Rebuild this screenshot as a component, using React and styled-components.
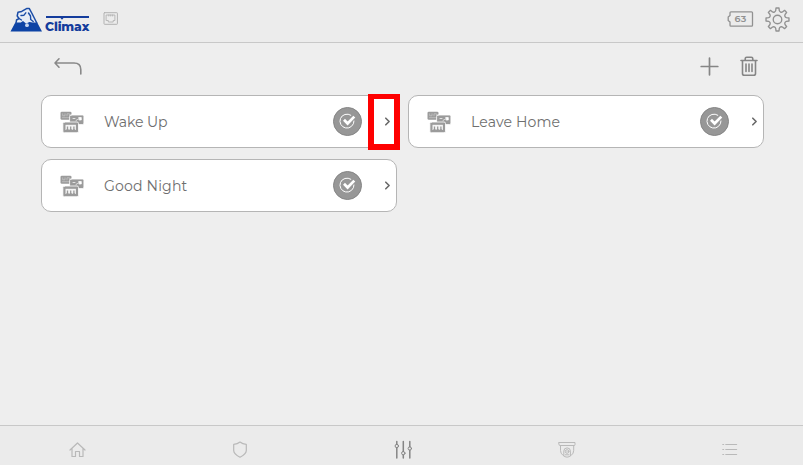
import React from "react";
import styled, { createGlobalStyle } from "styled-components";

const GlobalStyle = createGlobalStyle`
  * { box-sizing: border-box; }
  body { margin: 0; background: #eeeeee; font-family: Montserrat, Lato, "Open Sans", sans-serif; }
`;

const Screen = styled.div`
  display: flex;
  flex-direction: column;
  width: 803px;
  height: 465px;
  overflow: hidden;
  background: #eeeeee;
`;

const Header = styled.header`
  display: flex;
  align-items: flex-start;
  height: 43px;
  padding: 7px 13px 0 10px;
  background: #ececec;
  border-bottom: 1px solid #c8c8c8;
`;

const Brand = styled.div`
  display: flex;
  width: 92.5px;
  height: 27px;
`;

const BrandName = styled.div`
  display: flex;
  flex-direction: column;
  padding: 8px 0 0 2px;
  color: #143c9c;
  font: 800 12.3px/15px Montserrat, Inter, sans-serif;
  letter-spacing: -0.1px;
`;

const NetworkStatus = styled.div`
  padding-top: 5px;
`;

const HeaderTools = styled.div`
  display: flex;
  align-items: center;
  gap: 12px;
  margin: -0.5px 0.5px 0 auto;
`;

const Battery = styled.div`
  display: grid;
  width: 26px;
  height: 16px;
  color: #919191;
  > * { grid-area: 1 / 1; }
`;

const BatteryLevel = styled.span`
  place-self: center;
  padding-left: 2px;
  font: 600 9.5px/16px Montserrat, Inter, sans-serif;
  letter-spacing: 0.2px;
`;

const Main = styled.main`
  flex: 1;
  padding: 0 39px 0 41px;
`;

const Toolbar = styled.div`
  display: flex;
  align-items: center;
  height: 52px;
  padding: 0 5px 6px 12px;
`;

const ToolbarActions = styled.div`
  display: flex;
  align-items: center;
  gap: 21px;
  margin-left: auto;
`;

const IconButton = styled.button`
  display: flex;
  padding: 0;
  border: 0;
  background: none;
`;

const CardGrid = styled.div`
  display: grid;
  grid-template-columns: 356px 356px;
  gap: 11px;
`;

const Card = styled.article`
  position: relative;
  display: flex;
  align-items: center;
  height: 53px;
  padding: 0 5px 0 18px;
  border: 1px solid #b5b5b5;
  border-radius: 10px;
  background: #ffffff;
`;

const CardTitle = styled.span`
  flex: 1;
  padding-left: 20px;
  color: #6e6e6e;
  font-size: 14.1px;
  line-height: 20px;
  letter-spacing: ${(p) => p.$tracking}px;
  white-space: nowrap;
`;

const RunBadge = styled.span`
  display: flex;
  align-items: center;
  justify-content: center;
  width: 29px;
  height: 29px;
  margin-right: 22.5px;
  border: 1px solid #858585;
  border-radius: 50%;
  background: #979797;
`;

const Highlight = styled.span`
  position: absolute;
  top: -2px;
  right: -4px;
  width: 32px;
  height: 56px;
  border: solid #fe0000;
  border-width: 5px 6px 6px;
`;

const TabBar = styled.nav`
  display: flex;
  justify-content: space-between;
  height: 40px;
  padding: 12px 61px 0 65px;
  background: #ebebeb;
  border-top: 1px solid #c8c8c8;
`;

const Tab = styled.a`
  display: flex;
  width: 24px;
  height: 24px;
  color: ${(p) => (p.$active ? "#858585" : "#b9b9b9")};
`;

const Icon = styled.svg`
  display: block;
  flex: none;
  overflow: visible;
  color: ${(p) => p.$color || "inherit"};
  fill: none;
  stroke: currentColor;
  stroke-width: ${(p) => p.$weight || 1};
  stroke-linecap: round;
  stroke-linejoin: round;
`;

function Logo() {
  return (
    <Brand>
      <Icon width="33" height="26" viewBox="0 0 33 26" $color="#1a4ca6">
        <path d="M6 16V13l2.500-1.500L7 8l1.200-3.200L12 4l5-2.500 2.500.3L22 6.500l4.500 9.500z" fill="#e6ecf5" stroke="none" />
        <path d="M.5 24.500 5.300 15.500h5.500l2.200-1.500 3 2.500 3.500-1.500 3 .5h4.700L32 24.500z" fill="#0d43a5" stroke="none" />
        <path d="M6 16.500 6.500 13 9 11.500 7.200 9 8 5.200l3.700-.8 5.300-3h2.200L22 6.500l4.800 9.500" strokeWidth="1.500" />
        <path d="m11 8.500 3-.3 1.800-2.400M18.500 6l2 3 .2 3.500 2.500 2M9 11.500l2.500 1.500" strokeWidth="1.400" />
        <circle cx="17" cy="18.200" r="1.900" fill="#c8d7f0" stroke="none" />
      </Icon>
      <BrandName>
        <Icon width="44" height="4" viewBox="0 0 44 4" $color="#143c9c">
          <path d="M1 1h43v2H18.500L17 4.800 15.500 3H1z" fill="currentColor" stroke="none" />
        </Icon>
        Climax
      </BrandName>
    </Brand>
  );
}

function NetworkIcon() {
  return (
    <Icon width="15" height="13" viewBox="0 0 15 13" $color="#b2b2b2">
      <rect x="1" y=".7" width="13.400" height="11.600" rx=".6" />
      <path d="M3.500 3h8.400v5.500h-1.700V10H5.300V8.500H3.500zM5.800 3v1M7.700 3v1M9.600 3v1" strokeWidth=".9" />
    </Icon>
  );
}

function buildGearPath() {
  const points = [];
  for (let i = 0; i < 8; i += 1) {
    const base = (i * Math.PI) / 4;
    [[-0.2, 8.7], [-0.13, 11.1], [0.13, 11.1], [0.2, 8.7]].forEach(([offset, r]) => {
      points.push(`${(12 + r * Math.sin(base + offset)).toFixed(2)} ${(12 - r * Math.cos(base + offset)).toFixed(2)}`);
    });
  }
  const outline = points.map((xy, i) => {
    if (i === 0) return `M${xy}`;
    return i % 4 === 0 ? `A2.2 2.2 0 0 0 ${xy}` : `L${xy}`;
  });
  return `${outline.join("")}A2.2 2.2 0 0 0 ${points[0]}Z`;
}

const GEAR = buildGearPath();

function GearIcon() {
  return (
    <Icon width="25" height="25" viewBox="0 0 24 24" $color="#919191" $weight={1.3}>
      <path d={GEAR} />
      <circle cx="12" cy="12" r="4.1" />
    </Icon>
  );
}

function SceneIcon() {
  return (
    <Icon width="24" height="22" viewBox="0 0 24 22" $color="#9b9b9b">
      <rect x=".5" y=".8" width="11" height="8" rx="1.300" fill="currentColor" stroke="none" />
      <path d="M2.700 2.800v2h2.300v-2M7 4.800v-2h2.500v2M2.500 6.700h6.800" stroke="#c9c9c9" strokeWidth=".7" />
      <rect x="9.600" y="4" width="14.300" height="9.600" rx="1.500" fill="currentColor" stroke="#fff" strokeWidth=".8" />
      <path d="M13 7.500h2M19 6.500h2.300v2.500h-2zM16 9.500l1.500-1" fill="#fff" stroke="#fff" strokeWidth=".7" />
      <rect x="2.900" y="11" width="15.600" height="10.700" rx="1.500" fill="currentColor" stroke="#fff" strokeWidth=".8" />
      <path d="M5.500 13.800h10.400v5.200H5.500z" fill="#f4f4f4" stroke="none" />
      <path d="M7.500 15.500v3.600M10.700 15.500v3.600M13.900 15.500v3.600" strokeWidth="1.300" strokeLinecap="butt" />
      <path d="M6.600 18.800h1.800M9.800 18.800h1.800M13 18.800h1.800" strokeWidth="1" />
    </Icon>
  );
}

function SceneCard({ title, tracking, highlighted }) {
  return (
    <Card>
      <SceneIcon />
      <CardTitle $tracking={tracking}>{title}</CardTitle>
      <RunBadge>
        <Icon width="17" height="17" viewBox="0 0 17 17" $color="#ffffff">
          <path d="M11.800 2.200A7 7 0 1 0 15 8" />
          <path d="m5 6.800 3.600 3.700L15.300 3.600" strokeWidth="2.700" strokeLinecap="butt" strokeLinejoin="miter" />
        </Icon>
      </RunBadge>
      <Icon width="7" height="9" viewBox="0 0 7 9" $color="#686868" $weight={1.6}>
        <path d="m1.800 1.200 3.300 3.300-3.300 3.300" />
      </Icon>
      {highlighted && <Highlight />}
    </Card>
  );
}

const scenes = [
  { title: "Wake Up", tracking: -0.1, highlighted: true },
  { title: "Leave Home", tracking: 0.1 },
  { title: "Good Night", tracking: 0.15 },
];

export default function App() {
  return (
    <>
      <GlobalStyle />
      <Screen>
        <Header>
          <Logo />
          <NetworkStatus><NetworkIcon /></NetworkStatus>
          <HeaderTools>
            <Battery>
              <Icon width="26" height="16" viewBox="0 0 26 16" $weight={1.3}>
                <path d="M4 .8h20.500q1 0 1 1v12.400q0 1-1 1H4q-1 0-1-1V11L1.200 9.500V6L3 4.500V1.800q0-1 1-1z" />
              </Icon>
              <BatteryLevel>63</BatteryLevel>
            </Battery>
            <GearIcon />
          </HeaderTools>
        </Header>
        <Main>
          <Toolbar>
            <IconButton aria-label="Back">
              <Icon width="30" height="18" viewBox="0 0 30 18" $color="#898989" $weight={1.6}>
                <path d="M6 1.800 2 6l4 4.200M2.200 6H21q6.800 0 6.800 6.500V17" />
              </Icon>
            </IconButton>
            <ToolbarActions>
              <IconButton aria-label="Add">
                <Icon width="19" height="19" viewBox="0 0 19 19" $color="#858585" $weight={1.7}>
                  <path d="M9.500 1.200v16.600M1.200 9.500h16.600" />
                </Icon>
              </IconButton>
              <IconButton aria-label="Delete">
                <Icon width="19" height="21" viewBox="0.5 0.5 19 21" $color="#858585" $weight={1.6}>
                  <path d="M1.500 5h16M5.700 4.500V3.200q0-1.500 1.500-1.500h4.600q1.500 0 1.500 1.500v1.300M3 5v13q0 1.800 1.800 1.800h9.400q1.800 0 1.800-1.800V5M6.500 8.500v7.500M9.500 8.500v7.500M12.500 8.500v7.500" />
                </Icon>
              </IconButton>
            </ToolbarActions>
          </Toolbar>
          <CardGrid>
            {scenes.map((scene) => <SceneCard key={scene.title} {...scene} />)}
          </CardGrid>
        </Main>
        <TabBar>
          <Tab aria-label="Home">
            <Icon width="24" height="24" viewBox="0 0 24 24" $weight={1.2}>
              <path d="m5 12 7.500-7L20 12M7 10.500V18.500h3.500v-5h4v5H18V10.500" />
            </Icon>
          </Tab>
          <Tab aria-label="Security">
            <Icon width="24" height="24" viewBox="0 0 24 24" $weight={1.2}>
              <path d="M12 4q2.500 2 6.300 2.300v6.200q0 3.500-6.300 6.700-6.300-3.200-6.300-6.700V6.300Q9.500 6 12 4z" />
            </Icon>
          </Tab>
          <Tab aria-label="Controls" $active>
            <Icon width="24" height="24" viewBox="0.7 0 24 24" $weight={1.5}>
              <path d="M5.500 3.500v2.800m0 3.400v10.300M12 3.500v10m0 3.400v3.100M18.500 3.500v5.300m0 3.400v7.800" />
              <g strokeWidth="1"><circle cx="5.500" cy="8" r="1.700" /><circle cx="12" cy="15.200" r="1.700" /><circle cx="18.500" cy="10.500" r="1.700" /></g>
            </Icon>
          </Tab>
          <Tab aria-label="Camera">
            <Icon width="24" height="24" viewBox="0 0 24 24">
              <path d="M4 4.500h16v2.200q0 .8-.8.8H4.800q-.8 0-.8-.8zM5.500 7.500v4.900q0 3 2.500 5 4 3.500 8.200 0 2.500-2 2.500-5V7.500M8.800 17.500v-4.300a3.300 3.300 0 0 1 6.600 0v4.300" />
              <circle cx="12.100" cy="13.500" r="1.800" /><path d="M10.300 16.800h3.600M12 13.500v.1" />
            </Icon>
          </Tab>
          <Tab aria-label="Menu">
            <Icon width="24" height="24" viewBox="0.7 0 24 24" $weight={1.2}>
              <path d="M8.500 6.500h10.800M8.500 11.500h10.800M8.500 16.500h10.800M5.500 6.500h.8M5.500 11.500h.8M5.500 16.500h.8" />
            </Icon>
          </Tab>
        </TabBar>
      </Screen>
    </>
  );
}
